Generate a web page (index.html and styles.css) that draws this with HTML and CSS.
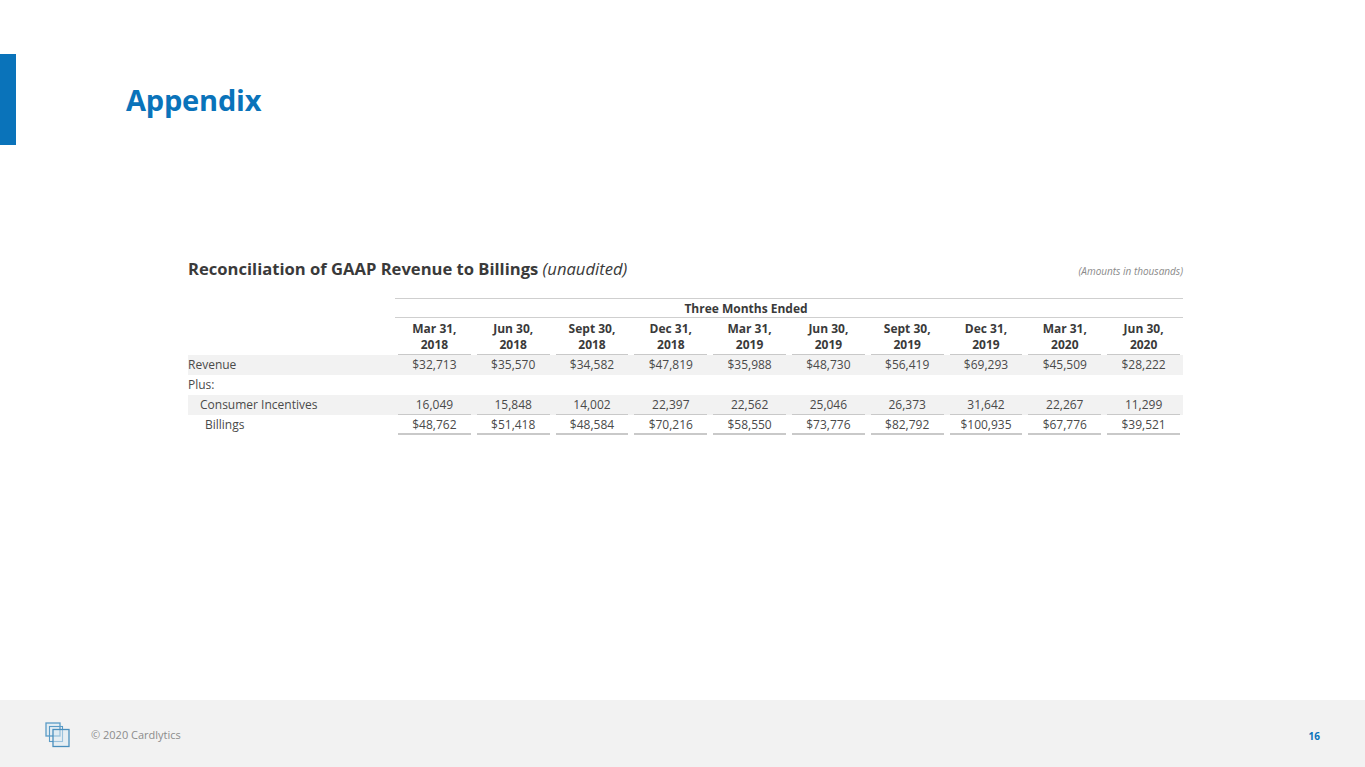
FILE: index.html
```html
<!DOCTYPE html>
<html lang="en">
<head>
<meta charset="utf-8">
<title>Appendix</title>
<link rel="stylesheet" href="styles.css">
</head>
<body>
<div class="slide">
  <header class="top">
    <div class="bar"></div>
    <h1 class="title">Appendix</h1>
  </header>

  <main class="content">
    <div class="caption">
      <h2 class="heading">Reconciliation of GAAP Revenue to Billings <em>(unaudited)</em></h2>
      <span class="units">(Amounts in thousands)</span>
    </div>

    <table class="recon">
      <colgroup>
        <col class="c-label">
        <col span="10" class="c-num">
      </colgroup>
      <thead>
        <tr class="group">
          <th class="blank"></th>
          <th colspan="10" class="group-title">Three Months Ended</th>
        </tr>
        <tr class="periods">
          <th class="blank"></th>
          <th class="ul">Mar 31,<br>2018</th>
          <th class="ul">Jun 30,<br>2018</th>
          <th class="ul">Sept 30,<br>2018</th>
          <th class="ul">Dec 31,<br>2018</th>
          <th class="ul">Mar 31,<br>2019</th>
          <th class="ul">Jun 30,<br>2019</th>
          <th class="ul">Sept 30,<br>2019</th>
          <th class="ul">Dec 31,<br>2019</th>
          <th class="ul">Mar 31,<br>2020</th>
          <th class="ul">Jun 30,<br>2020</th>
        </tr>
      </thead>
      <tbody>
        <tr class="shade">
          <td class="label">Revenue</td>
          <td>$32,713</td><td>$35,570</td><td>$34,582</td><td>$47,819</td><td>$35,988</td>
          <td>$48,730</td><td>$56,419</td><td>$69,293</td><td>$45,509</td><td>$28,222</td>
        </tr>
        <tr>
          <td class="label">Plus:</td>
          <td></td><td></td><td></td><td></td><td></td><td></td><td></td><td></td><td></td><td></td>
        </tr>
        <tr class="shade">
          <td class="label indent1">Consumer Incentives</td>
          <td class="ul">16,049</td><td class="ul">15,848</td><td class="ul">14,002</td><td class="ul">22,397</td><td class="ul">22,562</td>
          <td class="ul">25,046</td><td class="ul">26,373</td><td class="ul">31,642</td><td class="ul">22,267</td><td class="ul">11,299</td>
        </tr>
        <tr>
          <td class="label indent2">Billings</td>
          <td class="ul2">$48,762</td><td class="ul2">$51,418</td><td class="ul2">$48,584</td><td class="ul2">$70,216</td><td class="ul2">$58,550</td>
          <td class="ul2">$73,776</td><td class="ul2">$82,792</td><td class="ul2">$100,935</td><td class="ul2">$67,776</td><td class="ul2">$39,521</td>
        </tr>
      </tbody>
    </table>
  </main>

  <footer class="foot">
    <div class="brand">
      <svg class="logo" width="26" height="26" viewBox="0 0 26 26" aria-hidden="true">
        <rect x="1" y="1" width="14" height="13" fill="#d9e9f4" fill-opacity="0.6" stroke="#5a9bc6" stroke-width="1.3"/>
        <rect x="4.5" y="4.5" width="13" height="15" fill="none" stroke="#5a9bc6" stroke-width="1.1"/>
        <rect x="8" y="7.5" width="16" height="17" fill="#d9e9f4" fill-opacity="0.5" stroke="#4a8fbd" stroke-width="1.3"/>
      </svg>
      <span class="copy">© 2020 Cardlytics</span>
    </div>
    <span class="page">16</span>
  </footer>
</div>
</body>
</html>
```

FILE: styles.css
```css
* { box-sizing: border-box; }

html, body {
  margin: 0;
  padding: 0;
  background: #ffffff;
}

body {
  font-family: "Open Sans", "Liberation Sans", Arial, sans-serif;
  color: #3a3a3a;
}

.slide {
  width: 1365px;
  height: 767px;
  display: flex;
  flex-direction: column;
  overflow: hidden;
}

/* Header */
.top {
  display: flex;
  align-items: center;
  padding-top: 54px;
}

.bar {
  width: 16px;
  height: 91px;
  background: #0a73ba;
  flex: none;
}

.title {
  margin: 0 0 0 110px;
  font-size: 29px;
  font-weight: 700;
  color: #0a73ba;
  letter-spacing: -0.2px;
  line-height: 1;
}

/* Content */
.content {
  flex: 1;
  padding: 114px 182px 0 188px;
}

.caption {
  display: flex;
  justify-content: space-between;
  align-items: baseline;
}

.heading {
  margin: 0;
  font-size: 16.6px;
  font-weight: 700;
  color: #3a3a3a;
  line-height: 20px;
}

.heading em {
  font-weight: 400;
  font-style: italic;
}

.units {
  font-size: 10px;
  font-style: italic;
  color: #8a8a8a;
}

.recon {
  margin-top: 19px;
  width: 995px;
  border-collapse: separate;
  border-spacing: 0;
  table-layout: fixed;
  font-size: 12px;
  color: #4a4a4a;
}

.c-label { width: 207px; }
.c-num { width: 78.8px; }

.recon th,
.recon td {
  padding: 0;
  text-align: center;
  vertical-align: middle;
  white-space: nowrap;
}

.recon th {
  font-weight: 700;
  color: #3a3a3a;
}

.recon th.group-title {
  height: 19px;
  border-top: 1px solid #cfcfcf;
  border-bottom: 1px solid #cfcfcf;
  padding: 1px 86px 0 0;
  line-height: 17px;
}

.periods th {
  height: 37px;
  line-height: 16px;
  padding-top: 1px;
}

.recon td {
  height: 20px;
  line-height: 20px;
}

.recon td.label {
  text-align: left;
  padding-left: 0;
}

.recon td.indent1 { padding-left: 12px; }
.recon td.indent2 { padding-left: 17px; }

.shade td { background-color: #f2f2f2; }

.ul,
.ul2 {
  background-image: linear-gradient(#c9c9c9, #c9c9c9);
  background-repeat: no-repeat;
  background-position: center bottom;
  background-size: calc(100% - 6px) 1px;
}

.ul2 {
  background-size: calc(100% - 6px) 2px;
}

/* Footer */
.foot {
  height: 67px;
  flex: none;
  background: #f2f2f2;
  display: flex;
  align-items: center;
  justify-content: space-between;
  padding: 0 45px 0 45px;
}

.brand {
  display: flex;
  align-items: center;
}

.logo {
  display: block;
  margin-top: 2px;
}

.copy {
  margin-left: 20px;
  font-size: 11px;
  color: #8c8c8c;
  margin-top: 2px;
}

.page {
  font-size: 10px;
  font-weight: 700;
  color: #0a73ba;
  margin-top: 4px;
}
```
